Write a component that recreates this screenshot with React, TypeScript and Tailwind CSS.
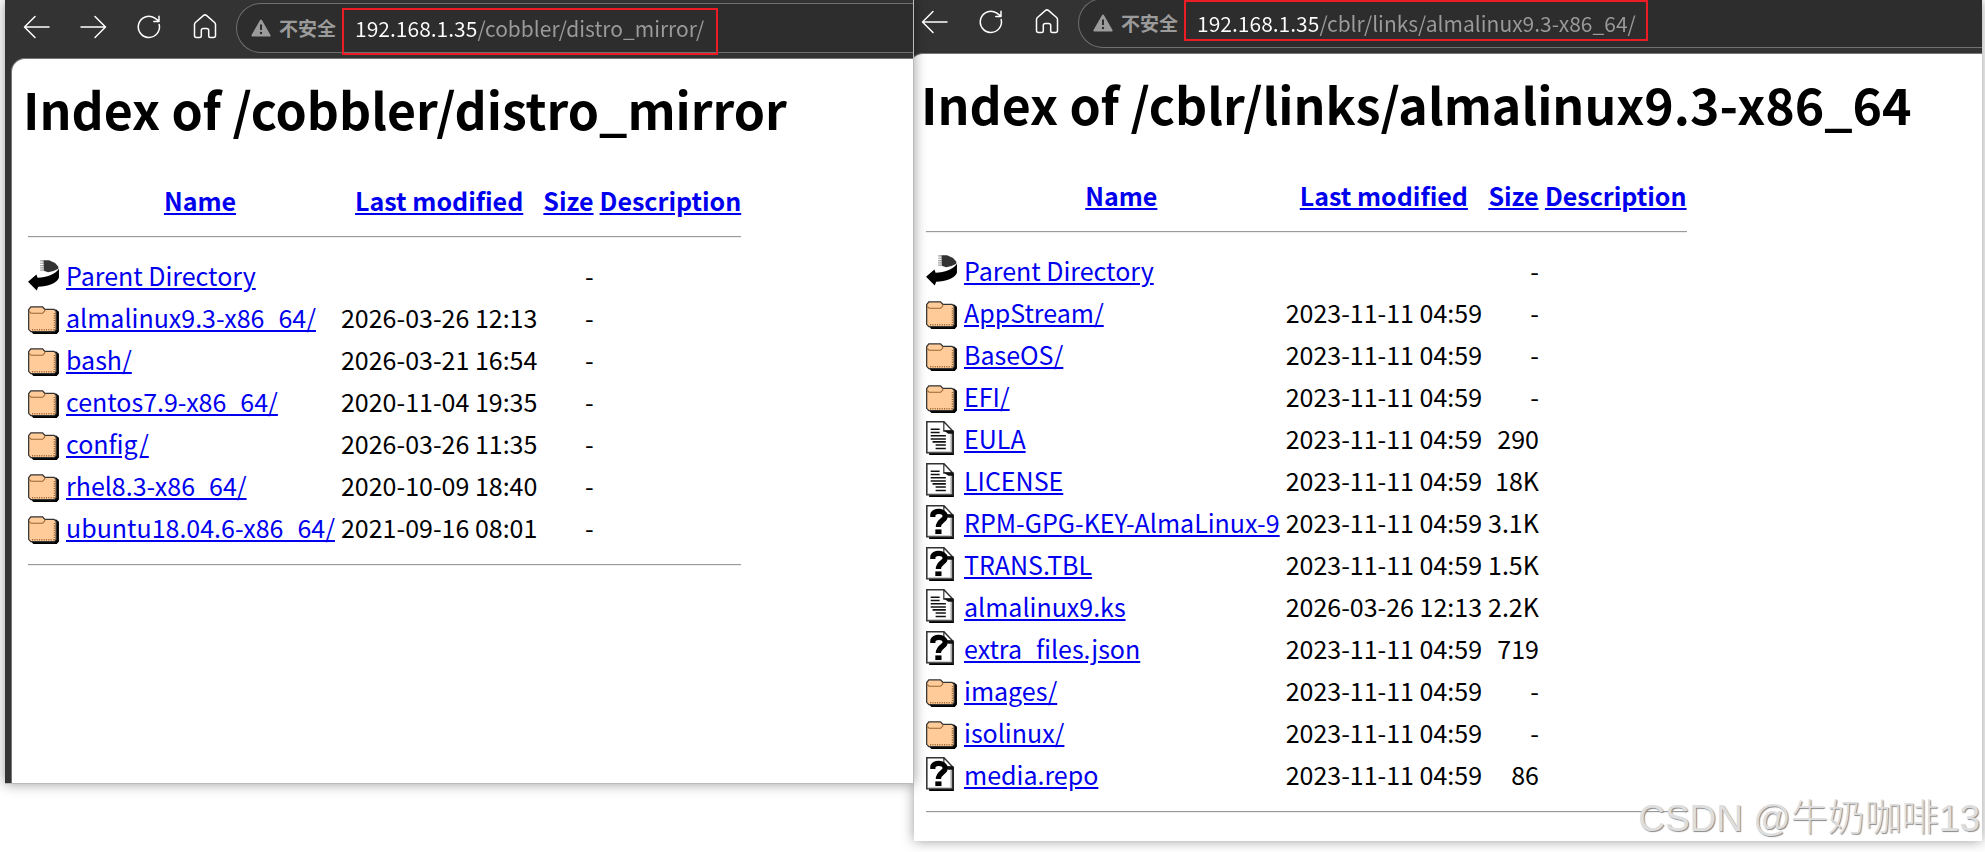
import type { ReactNode } from 'react';

type Kind = 'back' | 'folder' | 'text' | 'unknown';

interface Entry {
  kind: Kind;
  name: string;
  modified?: string;
  size?: string;
}

const mirrorEntries: Entry[] = [
  { kind: 'back', name: 'Parent Directory' },
  { kind: 'folder', name: 'almalinux9.3-x86_64/', modified: '2026-03-26 12:13' },
  { kind: 'folder', name: 'bash/', modified: '2026-03-21 16:54' },
  { kind: 'folder', name: 'centos7.9-x86_64/', modified: '2020-11-04 19:35' },
  { kind: 'folder', name: 'config/', modified: '2026-03-26 11:35' },
  { kind: 'folder', name: 'rhel8.3-x86_64/', modified: '2020-10-09 18:40' },
  { kind: 'folder', name: 'ubuntu18.04.6-x86_64/', modified: '2021-09-16 08:01' },
];

const linkEntries: Entry[] = [
  { kind: 'back', name: 'Parent Directory' },
  { kind: 'folder', name: 'AppStream/', modified: '2023-11-11 04:59' },
  { kind: 'folder', name: 'BaseOS/', modified: '2023-11-11 04:59' },
  { kind: 'folder', name: 'EFI/', modified: '2023-11-11 04:59' },
  { kind: 'text', name: 'EULA', modified: '2023-11-11 04:59', size: '290' },
  { kind: 'text', name: 'LICENSE', modified: '2023-11-11 04:59', size: '18K' },
  { kind: 'unknown', name: 'RPM-GPG-KEY-AlmaLinux-9', modified: '2023-11-11 04:59', size: '3.1K' },
  { kind: 'unknown', name: 'TRANS.TBL', modified: '2023-11-11 04:59', size: '1.5K' },
  { kind: 'text', name: 'almalinux9.ks', modified: '2026-03-26 12:13', size: '2.2K' },
  { kind: 'unknown', name: 'extra_files.json', modified: '2023-11-11 04:59', size: '719' },
  { kind: 'folder', name: 'images/', modified: '2023-11-11 04:59' },
  { kind: 'folder', name: 'isolinux/', modified: '2023-11-11 04:59' },
  { kind: 'unknown', name: 'media.repo', modified: '2023-11-11 04:59', size: '86' },
];

const Sheet = ({ children }: { children: ReactNode }) => (
  <>
    <path d="M2 21.2H17.2V7" fill="none" stroke="#000" strokeWidth="1.6" />
    <path d="M.5 .5H11.5L17 6.5V20.6H.5Z" fill="#fff" stroke="#333" strokeWidth="1" />
    <path d="M15.9 8.5V19.8H1.4" fill="none" stroke="#ccc" strokeWidth=".8" />
    {children}
    <path d="M11.5 .5V6.6H17.4Z" fill="#fff" stroke="#333" strokeWidth=".8" />
    <path d="M11.2 6H17.8V8.2H14.4Z" fill="#111" />
  </>
);

const EntryIcon = ({ kind }: { kind: Kind }) => (
  <svg viewBox="0 0 20 22" className="block h-[34px] w-[31px]" aria-hidden="true">
    {kind === 'back' && (
      <>
        <path d="M10 1.5H13.6L17.5 3.2L19.6 5.6V7L16.5 8.4L13 9.3L10.2 8.2Z" fill="#333" />
        <path d="M8.4 1.5V8.6M9.6 1.5V8.6" stroke="#555" strokeWidth=".7" strokeDasharray=".8 .7" />
        <path d="M20 7V12.8C18.6 16.4 12.8 18.6 6.6 18.6L5.6 21L0 15.4L5.4 10.6L6.2 12.8C12 12.7 17.6 10.6 20 7Z" fill="#000" />
      </>
    )}
    {kind === 'folder' && (
      <>
        <path d="M2 20.4L3.4 22H18.6L20 20.4V7.6L18 6Z" fill="#000" />
        <path
          d="M.4 6.2L1.8 4.4H9.4L10.8 6H16.8L18.2 7.4V19.2L17 20.5H1.8L.4 19Z"
          fill="#fc9"
          stroke="#333"
          strokeWidth=".8"
        />
        <path d="M.8 7.4L2 8.6H9.4L10.8 7.2V6" fill="none" stroke="#963" strokeWidth=".7" />
        <path d="M2.6 19.2H16.6" stroke="#963" strokeWidth="1" strokeDasharray=".7 .8" />
        <path d="M17.1 8.4V19.4" stroke="#963" strokeWidth="1" strokeDasharray=".7 .8" />
      </>
    )}
    {kind === 'text' && (
      <Sheet>
        <path
          d="M3 5.4H8.8M3 7.4H8.8M3 9.6H12.8M3 11.6H12.8M4.2 13.5H12.8M6.2 15.5H12.8M6.2 17.8H12.8"
          stroke="#111"
          strokeWidth="1"
        />
      </Sheet>
    )}
    {kind === 'unknown' && (
      <>
        <Sheet>
          <rect x="6" y="15.8" width="4" height="3" fill="#000" />
        </Sheet>
        <path d="M4.4 7.8V6.6C4.4 3.4 12.2 3.2 12.4 7.2C12.4 10 8 10 8 14.2" fill="none" stroke="#000" strokeWidth="3.4" />
      </>
    )}
  </svg>
);

const ToolButton = ({ label, children }: { label: string; children: ReactNode }) => (
  <button type="button" aria-label={label} className="flex h-12 w-14 shrink-0 items-center justify-center">
    <svg viewBox="0 0 28 28" className="size-7" fill="none" stroke="#fff" strokeWidth="1.5" strokeLinecap="round" strokeLinejoin="round">
      {children}
    </svg>
  </button>
);

interface WindowProps {
  url: string;
  title: string;
  entries: Entry[];
  forward?: boolean;
  fieldClass: string;
  markClass: string;
  bodyClass: string;
}

const BrowserWindow = ({ url, title, entries, forward, fieldClass, markClass, bodyClass }: WindowProps) => (
  <div className="bg-[#333] pl-[6px]">
    <div className="flex h-[58px] items-start pt-[3px]">
      <div className="-ml-[2px] mr-[3px] flex">
        <ToolButton label="Back">
          <path d="M26 14H2M12 3.5L1.5 14L12 24.5" />
        </ToolButton>
        {forward && (
          <ToolButton label="Forward">
            <path d="M2 14H26M16 3.5L26.5 14L16 24.5" />
          </ToolButton>
        )}
        <ToolButton label="Refresh">
          <path d="M24.2 11.5A10.6 10.6 0 1 1 19.5 4.9L24 8.2M24 3.2V8.4H18.8" />
        </ToolButton>
        <ToolButton label="Home">
          <path d="M3.5 11.5C3.5 10.6 3.8 10.1 4.4 9.5L12.6 2.4C13.5 1.7 14.5 1.7 15.4 2.4L23.6 9.5C24.2 10.1 24.5 10.6 24.5 11.5V22.5C24.5 23.9 23.7 24.5 22.5 24.5H19.3C18.3 24.5 17.7 23.9 17.7 23V17.6C17.7 16.2 16.9 15.5 15.6 15.5H12.4C11.1 15.5 10.3 16.2 10.3 17.6V23C10.3 23.9 9.7 24.5 8.7 24.5H5.5C4.3 24.5 3.5 23.9 3.5 22.5Z" />
        </ToolButton>
      </div>
      <div className="flex h-[50px] min-w-0 flex-1 items-center rounded-l-full border border-r-0 border-[#707070] bg-[#2d2d2d] pl-[14px]">
        <svg viewBox="0 0 20 18" className="h-[18px] w-5 shrink-0" aria-hidden="true">
          <path d="M10 1.5L18.6 16.6H1.4Z" fill="#9b9b9b" stroke="#9b9b9b" strokeWidth="2" strokeLinejoin="round" />
          <path d="M10 5.5V11" stroke="#2d2d2d" strokeWidth="2" />
          <circle cx="10" cy="14" r="1.2" fill="#2d2d2d" />
        </svg>
        <span className="ml-2 shrink-0 text-[19px] leading-6 font-bold text-[#9b9b9b]">不安全</span>
        <div className={`relative ml-[6px] flex h-full min-w-0 items-center pl-[13px] ${fieldClass}`}>
          {/* host is white, path is grey */}
          <input
            aria-label="Address"
            defaultValue={url}
            className="w-full bg-[linear-gradient(to_right,#fff_122px,#9b9b9b_122px)] bg-clip-text text-[21px] leading-8 text-transparent outline-none"
          />
          <div className={`pointer-events-none absolute inset-x-0 border-2 border-[#ed1c24] ${markClass}`} />
        </div>
      </div>
    </div>
    <main className={`rounded-tl-[14px] border-t border-l border-[#777] bg-white pl-4 ${bodyClass}`}>
      <h1 className="-ml-[5px] pt-[13px] text-[50px] leading-[72px] font-bold whitespace-nowrap">{title}</h1>
      <table className="mt-[35px] border-collapse text-[25px] leading-9 whitespace-nowrap">
        <thead>
          <tr className="h-[42px]">
            <th className="p-0" />
            {['Name', 'Last modified', 'Size', 'Description'].map((column) => (
              <th key={column} className="py-0 pr-0 pl-[6px] font-bold">
                <a href="#" className="text-[#0000ee] underline">
                  {column}
                </a>
              </th>
            ))}
          </tr>
          <tr>
            <th colSpan={5} className="p-0">
              <hr className="mt-[15px] mb-4 border-t border-b border-t-[#9a9a9a] border-b-[#eee]" />
            </th>
          </tr>
        </thead>
        <tbody>
          {entries.map((entry) => (
            <tr key={entry.name} className="h-[42px]">
              <td className="p-0">
                <EntryIcon kind={entry.kind} />
              </td>
              <td className="py-0 pr-0 pl-[7px]">
                <a href="#" className="text-[#0000ee] underline">
                  {entry.name}
                </a>
              </td>
              <td className="py-0 pr-0 pl-[6px] text-right">{entry.modified}</td>
              <td className="py-0 pr-0 pl-[6px] text-right">{entry.size ?? '-'}</td>
              <td />
            </tr>
          ))}
          <tr>
            <td colSpan={5} className="p-0">
              <hr className="mt-4 border-t border-b border-t-[#9a9a9a] border-b-[#eee]" />
            </td>
          </tr>
        </tbody>
      </table>
    </main>
  </div>
);

export default function App() {
  return (
    <div className="relative min-h-screen overflow-hidden bg-white pr-[3px] pl-[5px] font-['Noto_Sans_CJK_SC',sans-serif] text-black">
      <div className="grid grid-cols-[909fr_1068fr] items-start">
        <section className="relative z-10 min-w-0 overflow-hidden border-r border-b border-[#bbb] shadow-[0_0_12px_rgba(0,0,0,0.4)]">
          <BrowserWindow
            url="192.168.1.35/cobbler/distro_mirror/"
            title="Index of /cobbler/distro_mirror"
            entries={mirrorEntries}
            forward
            fieldClass="w-[376px]"
            markClass="top-1 -bottom-[3px]"
            bodyClass="pb-[217px]"
          />
        </section>
        <section className="min-w-0 overflow-hidden shadow-[0_0_12px_rgba(0,0,0,0.4)]">
          {/* the second capture is cropped a little on its top and left sides */}
          <div className="-mt-[5px] -ml-[11px]">
            <BrowserWindow
              url="192.168.1.35/cblr/links/almalinux9.3-x86_64/"
              title="Index of /cblr/links/almalinux9.3-x86_64"
              entries={linkEntries}
              fieldClass="w-[464px]"
              markClass="top-px bottom-[6px]"
              bodyClass="pb-7"
            />
          </div>
        </section>
      </div>
      <div className="absolute right-[5px] bottom-0 z-20 font-['Liberation_Sans','Noto_Sans_CJK_SC',sans-serif] text-[37px] leading-[66px] font-light whitespace-nowrap text-[#dedede] [text-shadow:1px_1px_1px_#888]">
        CSDN @牛奶咖啡13
      </div>
    </div>
  );
}
